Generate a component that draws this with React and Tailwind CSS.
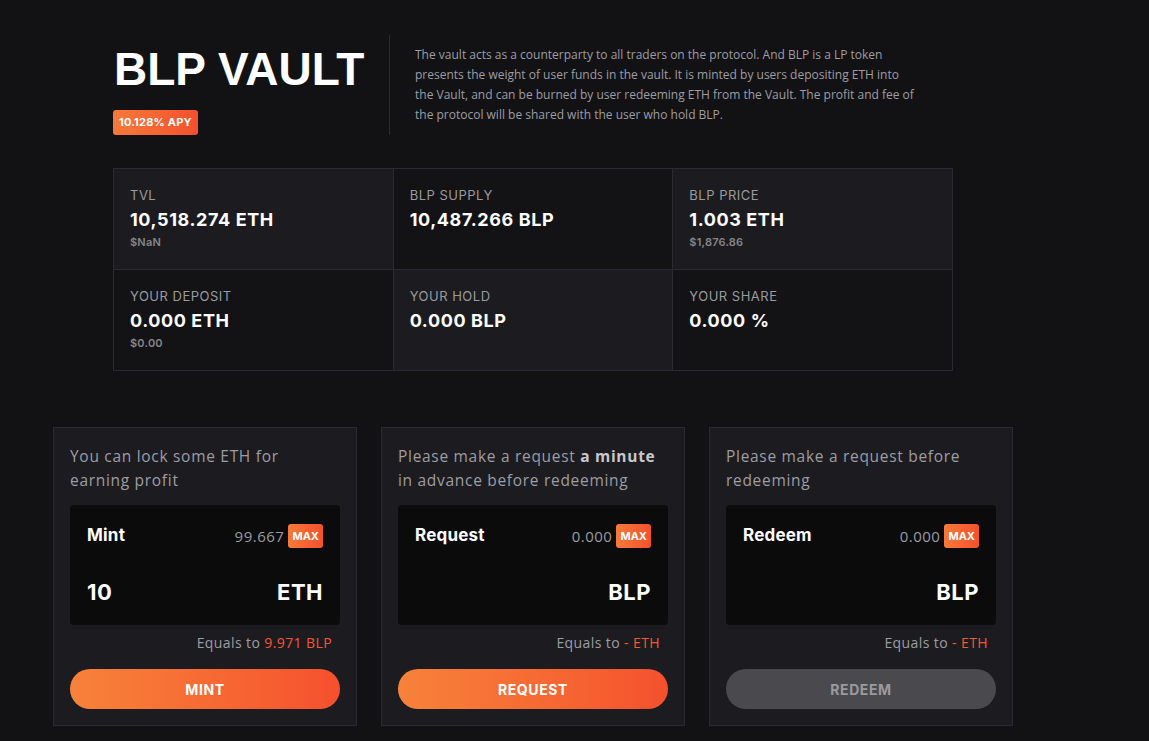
const stats = [
    { label: 'TVL', value: '10,518.274 ETH', sub: '$NaN', light: true },
    { label: 'BLP SUPPLY', value: '10,487.266 BLP', sub: '', light: false },
    { label: 'BLP PRICE', value: '1.003 ETH', sub: '$1,876.86', light: true },
    { label: 'YOUR DEPOSIT', value: '0.000 ETH', sub: '$0.00', light: false },
    { label: 'YOUR HOLD', value: '0.000 BLP', sub: '', light: true },
    { label: 'YOUR SHARE', value: '0.000 %', sub: '', light: false },
];

const ActionCard = ({ intro, title, balance, amount, unit, equals, button, disabled }) => (
    <div className="flex flex-col border border-[#2a2a30] bg-[#1c1c20] px-4 pt-4 pb-4">
        <p className="font-['Open_Sans',sans-serif] text-[15.5px] leading-6 tracking-[0.7px] text-[#9d9da3]">{intro}</p>
        <div className="mt-[13px] flex h-[120px] flex-col justify-between rounded bg-[#0b0b0c] px-[17px] pt-[18px] pb-[19px]">
            <div className="flex items-center justify-between">
                <span className="text-[17px] font-bold tracking-[0.2px] text-white">{title}</span>
                <div className="flex items-center gap-1">
                    <span className="font-['Open_Sans',sans-serif] text-[15px] tracking-[0.5px] text-[#9a9a9f]">{balance}</span>
                    <span className="flex h-6 items-center rounded-[3px] bg-gradient-to-r from-[#f7793a] to-[#f4502d] px-[4px] text-[11px] font-bold text-white">MAX</span>
                </div>
            </div>
            <div className="flex h-7 items-center justify-between text-[22px] font-bold tracking-[0.5px] text-white">
                <span>{amount}</span>
                <span>{unit}</span>
            </div>
        </div>
        <p className="mt-2 pr-2 text-right font-['Open_Sans',sans-serif] text-[14px] leading-5 tracking-[0.4px] text-[#9d9da3]">
            Equals to <span className="text-[#f5582e]">{equals}</span>
        </p>
        <button
            className={`mt-4 h-10 w-full rounded-full text-[14px] font-bold tracking-[0.6px] ${disabled ? 'bg-[#4a4a4e] text-[#9b9b9e]' : 'bg-gradient-to-r from-[#f7823a] to-[#f5502d] text-white'}`}
        >
            {button}
        </button>
    </div>
);

export default function App() {
    return (
        <div className="min-h-[741px] bg-[#121215] font-['Inter',sans-serif]">
            <div className="ml-[53px] w-[960px] pt-[35px]">
                <div className="mx-[60px]">
                    <div className="flex">
                        <div className="w-[276px] shrink-0">
                            <h1 className="mt-[3px] ml-[1px] font-['Liberation_Sans',sans-serif] text-[46px] leading-[62px] font-bold text-white">BLP VAULT</h1>
                            <span className="mt-[10px] inline-flex h-[25px] items-center rounded-[3px] bg-gradient-to-r from-[#f7793a] to-[#f4502d] px-[6px] text-[11px] font-bold tracking-[0.2px] text-white">10.128% APY</span>
                        </div>
                        <div className="h-[100px] w-px bg-[#2c2c32]" />
                        <p className="ml-[25px] mt-[10px] font-['Open_Sans',sans-serif] text-[12px] leading-5 text-[#9d9da3]">
                            The vault acts as a counterparty to all traders on the protocol. And BLP is a LP token<br />
                            presents the weight of user funds in the vault. It is minted by users depositing ETH into<br />
                            the Vault, and can be burned by user redeeming ETH from the Vault. The profit and fee of<br />
                            the protocol will be shared with the user who hold BLP.
                        </p>
                    </div>

                    <div className="mt-[33px] grid grid-cols-3 gap-px border border-[#2a2a30] bg-[#2a2a30]">
                        {stats.map((s) => (
                            <div key={s.label} className={`h-[100px] px-4 pt-4 ${s.light ? 'bg-[#1c1c20]' : 'bg-[#131316]'}`}>
                                <div className="text-[13px] leading-5 tracking-[0.5px] text-[#9a9a9f]">{s.label}</div>
                                <div className="mt-[3px] text-[18px] leading-6 font-bold tracking-[0.6px] text-white">{s.value}</div>
                                <div className="mt-[2px] text-[11px] leading-4 font-semibold tracking-[0.2px] text-[#85858a]">{s.sub}</div>
                            </div>
                        ))}
                    </div>
                </div>

                <div className="mt-[56px] grid grid-cols-3 gap-6">
                    <ActionCard
                        intro={<>You can lock some ETH for<br />earning profit</>}
                        title="Mint"
                        balance="99.667"
                        amount="10"
                        unit="ETH"
                        equals="9.971 BLP"
                        button="MINT"
                    />
                    <ActionCard
                        intro={<>Please make a request <b className="font-bold text-[#c8c8cc]">a minute</b><br />in advance before redeeming</>}
                        title="Request"
                        balance="0.000"
                        amount=""
                        unit="BLP"
                        equals="- ETH"
                        button="REQUEST"
                    />
                    <ActionCard
                        intro={<>Please make a request before<br />redeeming</>}
                        title="Redeem"
                        balance="0.000"
                        amount=""
                        unit="BLP"
                        equals="- ETH"
                        button="REDEEM"
                        disabled
                    />
                </div>
            </div>
        </div>
    );
}
